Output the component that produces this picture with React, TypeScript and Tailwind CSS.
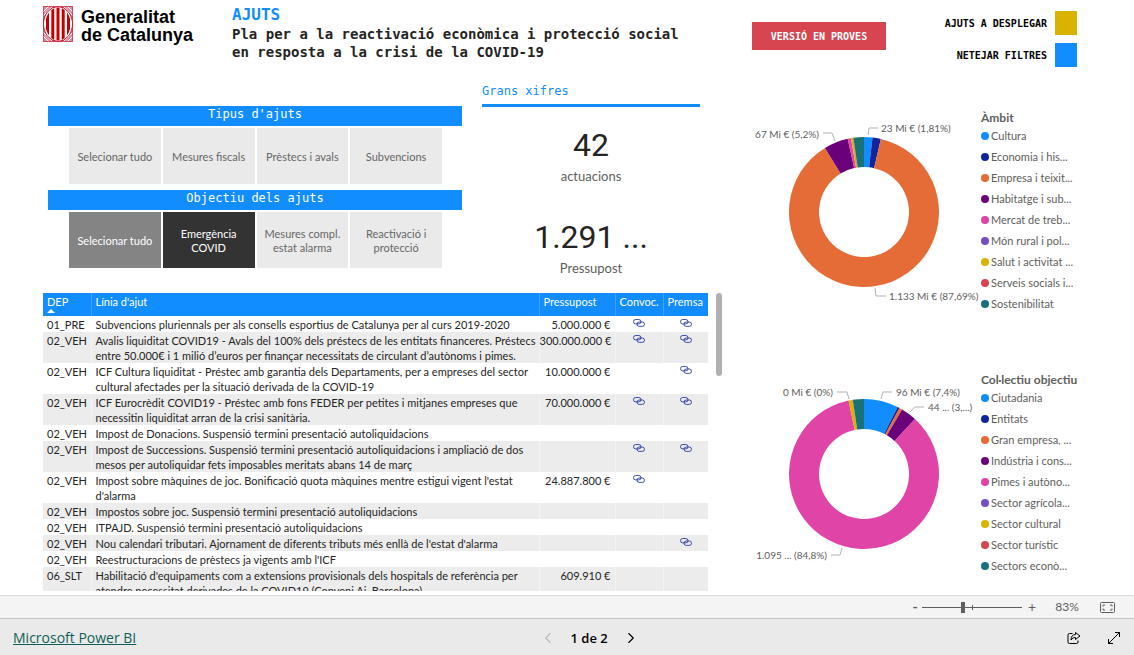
import { useState } from 'react'
import { ChevronLeft, ChevronRight } from 'lucide-react'

type Slice = { label: string; value: number; color: string }
type Callout = { text: string; x: number; y: number; anchor: 'start' | 'end'; line: string }

const colors = ['#118dff', '#12239e', '#e66c37', '#6b007b', '#e044a7', '#744ec2', '#d9b300', '#d64550', '#197278']

const ambit: Slice[] = [
  { label: 'Cultura', value: 1.81, color: colors[0] },
  { label: 'Economia i his...', value: 1.8, color: colors[1] },
  { label: 'Empresa i teixit...', value: 87.69, color: colors[2] },
  { label: 'Habitatge i sub...', value: 5.2, color: colors[3] },
  { label: 'Mercat de treb...', value: 0.7, color: colors[4] },
  { label: 'Món rural i pol...', value: 0, color: colors[5] },
  { label: 'Salut i activitat ...', value: 0.45, color: colors[6] },
  { label: 'Serveis socials i...', value: 0.1, color: colors[7] },
  { label: 'Sostenibilitat', value: 2.25, color: colors[8] }
]

const ambitCallouts: Callout[] = [
  { text: '67 Mi € (5,2%)', x: 85, y: 32, anchor: 'end', line: '89,27 98,27 101,35' },
  { text: '23 Mi € (1,81%)', x: 147, y: 26, anchor: 'start', line: '134,29 135,22 144,22' },
  { text: '1.133 Mi € (87,69%)', x: 155, y: 194, anchor: 'start', line: '141,182 142,190 152,190' }
]

const collectiu: Slice[] = [
  { label: 'Ciutadania', value: 7.4, color: colors[0] },
  { label: 'Entitats', value: 0.45, color: colors[1] },
  { label: 'Gran empresa, ...', value: 0.65, color: colors[2] },
  { label: 'Indústria i cons...', value: 3.4, color: colors[3] },
  { label: 'Pimes i autòno...', value: 84.8, color: colors[4] },
  { label: 'Sector agrícola...', value: 0, color: colors[5] },
  { label: 'Sector cultural', value: 0.85, color: colors[6] },
  { label: 'Sector turístic', value: 0.05, color: colors[7] },
  { label: 'Sectors econò...', value: 2.4, color: colors[8] }
]

const collectiuCallouts: Callout[] = [
  { text: '0 Mi € (0%)', x: 99, y: 28, anchor: 'end', line: '103,24 113,24 115,31' },
  { text: '96 Mi € (7,4%)', x: 162, y: 28, anchor: 'start', line: '147,31 149,24 158,24' },
  { text: '44 ... (3,...)', x: 194, y: 43, anchor: 'start', line: '176,44 181,39 190,39' },
  { text: '1.095 ... (84,8%)', x: 93, y: 191, anchor: 'end', line: '97,187 106,187 108,180' }
]

const rows = [
  { dep: '01_PRE', name: 'Subvencions pluriennals per als consells esportius de Catalunya per al curs 2019-2020', budget: '5.000.000 €', convoc: true, premsa: true },
  { dep: '02_VEH', name: 'Avalis liquiditat COVID19 - Avals del 100% dels préstecs de les entitats financeres. Préstecs entre 50.000€ i 1 milió d’euros per finançar necessitats de circulant d’autònoms i pimes.', budget: '300.000.000 €', convoc: true, premsa: true },
  { dep: '02_VEH', name: 'ICF Cultura liquiditat - Préstec amb garantia dels Departaments, per a empreses del sector cultural afectades per la situació derivada de la COVID-19', budget: '10.000.000 €', convoc: false, premsa: true },
  { dep: '02_VEH', name: 'ICF Eurocrèdit COVID19 - Préstec amb fons FEDER per petites i mitjanes empreses que necessitin liquiditat arran de la crisi sanitària.', budget: '70.000.000 €', convoc: true, premsa: true },
  { dep: '02_VEH', name: 'Impost de Donacions. Suspensió termini presentació autoliquidacions', budget: '', convoc: false, premsa: false },
  { dep: '02_VEH', name: 'Impost de Successions. Suspensió termini presentació autoliquidacions i ampliació de dos mesos per autoliquidar fets imposables meritats abans 14 de març', budget: '', convoc: true, premsa: true },
  { dep: '02_VEH', name: "Impost sobre màquines de joc. Bonificació quota màquines mentre estigui vigent l'estat d'alarma", budget: '24.887.800 €', convoc: true, premsa: false },
  { dep: '02_VEH', name: 'Impostos sobre joc. Suspensió termini presentació autoliquidacions', budget: '', convoc: false, premsa: false },
  { dep: '02_VEH', name: 'ITPAJD. Suspensió termini presentació autoliquidacions', budget: '', convoc: false, premsa: false },
  { dep: '02_VEH', name: "Nou calendari tributari. Ajornament de diferents tributs més enllà de l'estat d'alarma", budget: '', convoc: false, premsa: true },
  { dep: '02_VEH', name: "Reestructuracions de prèstecs ja vigents amb l'ICF", budget: '', convoc: false, premsa: false },
  { dep: '06_SLT', name: "Habilitació d'equipaments com a extensions provisionals dels hospitals de referència per atendre necessitat derivades de la COVID19 (Conveni Aj. Barcelona)", budget: '609.910 €', convoc: false, premsa: false }
]

const Logo = () => (
  <svg viewBox="0 0 30 36" className="h-9 w-[30px] shrink-0" fill="none" aria-hidden="true">
    <rect width="30" height="36" fill="#c8102e" fillOpacity="0.45" />
    <path d="M0 6 6 0M0 10 10 0M30 6 24 0M30 10 20 0M0 30l6 6M0 26l10 10M30 30l-6 6M30 26 20 36" stroke="#fff" />
    <rect x="0.5" y="0.5" width="29" height="35" stroke="#c8102e" strokeOpacity="0.6" />
    <ellipse cx="15" cy="18" rx="14.5" ry="17.5" fill="#fff" stroke="#c8102e" />
    <clipPath id="shield">
      <ellipse cx="15" cy="18" rx="12.5" ry="16.5" />
    </clipPath>
    <path d="M4.5 0v36M9.8 0v36M15 0v36M20.2 0v36M25.5 0v36" stroke="#c40000" strokeWidth="3" clipPath="url(#shield)" />
  </svg>
)

const LinkIcon = () => (
  <svg viewBox="0 0 12 8" className="h-2 w-3" fill="none" stroke="#12239e" strokeWidth="0.8">
    <rect x="0.5" y="0.5" width="7.5" height="4.4" rx="2.2" />
    <rect x="4" y="3" width="7.5" height="4.4" rx="2.2" />
  </svg>
)

const polar = (r: number, fraction: number) => {
  const a = fraction * 2 * Math.PI
  return `${(130 + r * Math.sin(a)).toFixed(2)} ${(106 - r * Math.cos(a)).toFixed(2)}`
}

const Donut = ({ title, slices, callouts }: { title: string; slices: Slice[]; callouts: Callout[] }) => {
  const total = slices.reduce((sum, s) => sum + s.value, 0)
  let start = 0

  return (
    <section className="flex h-[262px] gap-px">
      <svg viewBox="0 0 246 200" className="h-[200px] w-[246px] shrink-0 overflow-visible" role="img" aria-label={title}>
        {slices.map((slice) => {
          const from = start / total
          start += slice.value
          const to = start / total
          const large = to - from > 0.5 ? 1 : 0
          return (
            <path
              key={slice.label}
              fill={slice.color}
              d={`M${polar(75, from)}A75 75 0 ${large} 1 ${polar(75, to)}L${polar(45, to)}A45 45 0 ${large} 0 ${polar(45, from)}Z`}
            />
          )
        })}
        {callouts.map((c) => (
          <g key={c.text}>
            <polyline points={c.line} fill="none" stroke="#b3b3b3" />
            <text x={c.x} y={c.y} textAnchor={c.anchor} className="fill-[#605e5c] text-[10px]">
              {c.text}
            </text>
          </g>
        ))}
      </svg>
      <div className="pt-1 text-[11px] whitespace-nowrap text-[#605e5c]">
        <h3 className="text-xs leading-[15px] font-bold">{title}</h3>
        <ul>
          {slices.map((slice) => (
            <li key={slice.label} className="flex items-center gap-0.5 leading-[21px]">
              <span className="size-2 rounded-full" style={{ backgroundColor: slice.color }} />
              {slice.label}
            </li>
          ))}
        </ul>
      </div>
    </section>
  )
}

const Slicer = ({ title, options, initial }: { title: string; options: string[]; initial?: number }) => {
  const [selected, setSelected] = useState(initial)

  const tone = (index: number) => {
    if (selected === undefined) return 'bg-[#eaeaea] text-[#666666]'
    if (index === selected) return 'bg-[#333333] text-white'
    if (index === 0) return 'bg-[#848484] text-white'
    return 'bg-[#eaeaea] text-[#666666]'
  }

  return (
    <section>
      <h2 className="h-5 bg-[#118dff] text-center font-['DejaVu_Sans_Mono',monospace] text-xs leading-4 text-white">{title}</h2>
      <div className="mt-0.5 grid grid-cols-4 gap-0.5 pr-5 pl-[21px]">
        {options.map((option, index) => (
          <button
            key={option}
            type="button"
            aria-pressed={index === selected}
            onClick={() => setSelected(index || undefined)}
            className={`h-14 px-1.5 pt-0.5 text-[11px] leading-[14px] ${tone(index)}`}
          >
            {option}
          </button>
        ))}
      </div>
    </section>
  )
}

const Figure = ({ value, label }: { value: string; label: string }) => (
  <div className="text-center">
    <p className="font-[Roboto,sans-serif] text-[32px] leading-11 text-[#252423]">{value}</p>
    <p className="text-[13px] leading-[18px] text-[#605e5c]">{label}</p>
  </div>
)

const AidTable = () => (
  <div className="mt-4 flex min-h-0 flex-1 items-start gap-2">
    <div className="h-full min-w-0 flex-1 overflow-y-auto [scrollbar-width:none]">
      <table className="w-full table-fixed text-[11px] leading-[15px] text-[#252423]">
        <colgroup>
          <col className="w-12" />
          <col />
          <col className="w-[76px]" />
          <col className="w-12" />
          <col className="w-[45px]" />
        </colgroup>
        <thead className="bg-[#118dff] text-left text-white">
          <tr className="h-[23px] align-top [&>th]:px-1 [&>th]:pt-px [&>th]:font-normal [&>th+th]:border-l [&>th+th]:border-white/20">
            <th scope="col">
              DEP
              <span className="block size-0 border-x-4 border-b-4 border-x-transparent border-b-white" />
            </th>
            <th scope="col">Línia d'ajut</th>
            <th scope="col">Pressupost</th>
            <th scope="col">Convoc.</th>
            <th scope="col">Premsa</th>
          </tr>
        </thead>
        <tbody>
          {rows.map((row) => (
            <tr key={row.name} className="align-top even:bg-[#ececec] [&>td]:pt-px [&>td+td]:border-l [&>td+td]:border-white/40">
              <td className="px-1">{row.dep}</td>
              <td className="pr-0.5 pl-1">{row.name}</td>
              <td className="pr-1 text-right whitespace-nowrap">{row.budget}</td>
              <td>
                {row.convoc && (
                  <a href="#convocatoria" aria-label="Convocatòria" className="flex justify-center pt-0.5">
                    <LinkIcon />
                  </a>
                )}
              </td>
              <td>
                {row.premsa && (
                  <a href="#premsa" aria-label="Nota de premsa" className="flex justify-center pt-0.5">
                    <LinkIcon />
                  </a>
                )}
              </td>
            </tr>
          ))}
        </tbody>
      </table>
    </div>
    <div className="h-[83px] w-1.5 rounded-full bg-[#b0b0b0]" />
  </div>
)

const Header = () => (
  <header className="flex h-[82px] shrink-0 items-start pr-[57px] pl-[43px] font-['DejaVu_Sans_Mono',monospace]">
    <div className="flex w-[189px] shrink-0 gap-2 pt-1.5">
      <Logo />
      <p className="pt-0.5 font-['Liberation_Sans',sans-serif] text-lg leading-[18px] font-bold text-black">
        Generalitat
        <br />
        de Catalunya
      </p>
    </div>
    <div className="flex-1 pt-[5px] text-sm leading-[18px] font-bold text-[#252423]">
      <p className="text-base leading-5 text-[#118dff]">AJUTS</p>
      <h1>
        Pla per a la reactivació econòmica i protecció social
        <br />
        en resposta a la crisi de la COVID-19
      </h1>
    </div>
    <button type="button" className="mt-[22px] h-7 w-[134px] bg-[#d64550] text-[10px] font-bold text-white">
      VERSIÓ EN PROVES
    </button>
    <div className="flex w-[191px] flex-col items-end gap-2 pt-[11px] text-[10px] font-bold text-black">
      <button type="button" className="flex items-center gap-2">
        AJUTS A DESPLEGAR
        <span className="h-6 w-[22px] bg-[#d9b300]" />
      </button>
      <button type="button" className="flex items-center gap-2">
        NETEJAR FILTRES
        <span className="h-6 w-[22px] bg-[#118dff]" />
      </button>
    </div>
  </header>
)

const ZoomBar = () => (
  <div className="flex h-[23px] shrink-0 items-center justify-end border-t border-[#dcdcdc] bg-[#f4f4f4] pr-[19px] text-[#605e5c]">
    <button type="button" aria-label="Redueix" className="w-3.5 text-sm font-bold">
      -
    </button>
    <div className="relative flex items-center">
      <input
        type="range"
        aria-label="Zoom"
        min={0}
        max={100}
        defaultValue={41}
        className="h-px w-[100px] appearance-none bg-[#605e5c] [&::-webkit-slider-thumb]:h-[11px] [&::-webkit-slider-thumb]:w-1 [&::-webkit-slider-thumb]:appearance-none [&::-webkit-slider-thumb]:bg-[#605e5c]"
      />
      <span className="absolute left-1/2 h-[5px] w-px bg-[#605e5c]" />
    </div>
    <button type="button" aria-label="Amplia" className="w-5 text-sm">
      +
    </button>
    <span className="w-[50px] text-center text-xs">83%</span>
    <button type="button" aria-label="Ajusta a la pàgina" className="ml-2">
      <svg viewBox="0 0 15 11" className="h-[11px] w-[15px]" fill="none" stroke="currentColor">
        <rect x="0.5" y="0.5" width="14" height="10" rx="1" />
        <path d="M3 4.5V3h2M10 3h2v1.5M12 6.5V8h-2M5 8H3V6.5" />
      </svg>
    </button>
  </div>
)

const Footer = () => (
  <footer className="flex h-[37px] shrink-0 items-center justify-between border-t border-[#c4c4c4] bg-[#eaeaea] pt-0.5 pl-[13px] font-['Open_Sans',sans-serif] text-sm text-black">
    <a href="#powerbi" className="text-[#0f5f59] underline">
      Microsoft Power BI
    </a>
    <nav className="flex items-center gap-3.5">
      <button type="button" aria-label="Pàgina anterior" disabled className="text-[#b8b8b8]">
        <ChevronLeft size={18} strokeWidth={1.5} />
      </button>
      <span className="text-[13px] font-semibold">1 de 2</span>
      <button type="button" aria-label="Pàgina següent">
        <ChevronRight size={18} strokeWidth={1.5} />
      </button>
    </nav>
    <div className="flex pl-3">
      <button type="button" aria-label="Comparteix" className="flex w-10 justify-center">
        <svg viewBox="0 0 14 14" className="size-3.5" fill="none" stroke="currentColor" strokeLinejoin="round">
          <path d="M5.5 2.5h-3A1.500 1.500 0 0 0 1 4v7a1.500 1.500 0 0 0 1.500 1.500h7A1.500 1.500 0 0 0 11 11V9.500" />
          <path d="M8.500 1.500v2C5.500 3.700 4 5.500 4 9c1.200-1.800 2.500-2.500 4.500-2.500v2L13 5z" />
        </svg>
      </button>
      <button type="button" aria-label="Pantalla completa" className="flex w-10 justify-center">
        <svg viewBox="0 0 14 14" className="size-3.5" fill="none" stroke="currentColor">
          <path d="M1.500 12.500l11-11M8 1.500h4.500v4.500M1.500 8v4.500h4.500" />
        </svg>
      </button>
    </div>
  </footer>
)

const App = () => (
  <div className="flex h-screen min-h-[560px] flex-col bg-white font-[Lato,sans-serif]">
    <Header />

    <main className="grid min-h-0 flex-1 grid-cols-[minmax(0,1fr)_400px] pb-1">
      <div className="flex min-h-0 flex-col pr-3 pl-[43px]">
        <div className="flex gap-5 pr-[22px] pl-[5px]">
          <div className="flex flex-1 flex-col gap-1.5 pt-6">
            <Slicer title="Tipus d'ajuts" options={['Selecionar tudo', 'Mesures fiscals', 'Prèstecs i avals', 'Subvencions']} />
            <Slicer
              title="Objectiu dels ajuts"
              options={['Selecionar tudo', 'Emergència COVID', 'Mesures compl. estat alarma', 'Reactivació i protecció']}
              initial={1}
            />
          </div>
          <div className="w-[218px]">
            <h2 className="border-b-3 border-[#118dff] pb-1 font-['DejaVu_Sans_Mono',monospace] text-xs leading-[18px] text-[#118dff]">
              Grans xifres
            </h2>
            <div className="flex flex-col gap-[30px] pt-4">
              <Figure value="42" label="actuacions" />
              <Figure value="1.291 ..." label="Pressupost" />
            </div>
          </div>
        </div>
        <AidTable />
      </div>

      <div className="min-h-0 overflow-hidden pt-6">
        <Donut title="Àmbit" slices={ambit} callouts={ambitCallouts} />
        <Donut title="Col·lectiu objectiu" slices={collectiu} callouts={collectiuCallouts} />
      </div>
    </main>

    <ZoomBar />
    <Footer />
  </div>
)

export default App
